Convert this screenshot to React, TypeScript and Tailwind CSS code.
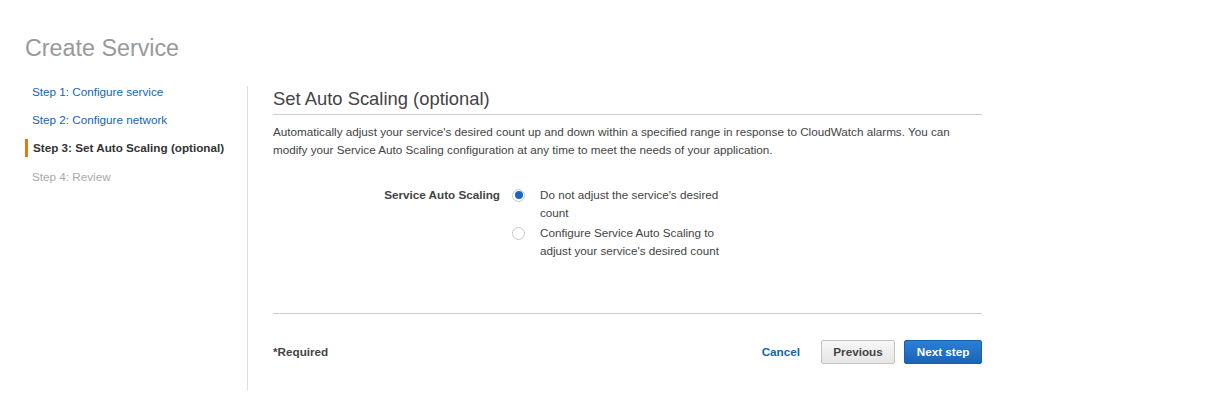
import React from "react";

export default function App() {
  const font = { fontFamily: '"Liberation Sans", Arial, sans-serif' };
  return (
    <div className="min-h-[405px] bg-white pl-[25px] pt-[34px]" style={font}>
      <h1 className="text-[23.3px] leading-[28px] text-[#999999] font-normal">Create Service</h1>
      <div className="flex mt-[15px]">
        <div className="w-[222px] shrink-0 text-[11.7px] pt-[1px]">
          <div className="py-[5px] leading-[18px] pl-[7px] text-[#1166bb]">Step 1: Configure service</div>
          <div className="py-[5px] leading-[18px] pl-[7px] text-[#1166bb]">Step 2: Configure network</div>
          <div className="my-[5px] leading-[18px] pl-[5px] border-l-[3px] border-[#e47911] font-bold text-[#333333]">
            Step 3: Set Auto Scaling (optional)
          </div>
          <div className="py-[6px] leading-[18px] pl-[7px] text-[#aaaaaa]">Step 4: Review</div>
        </div>
        <div className="mt-[9px] border-l border-[#dddddd] pl-[25px] pb-[26px] w-[735px]">
          <h2 className="text-[18.4px] leading-[24px] text-[#444444] font-normal pt-[1px] pb-[3px] border-b border-[#cccccc]">
            Set Auto Scaling (optional)
          </h2>
          <p className="mt-[8px] text-[11.7px] leading-[18px] text-[#444444]">
            Automatically adjust your service's desired count up and down within a specified range in response to CloudWatch alarms. You can modify your Service Auto Scaling configuration at any time to meet the needs of your application.
          </p>
          <div className="mt-[27px] flex text-[11.7px] leading-[18px] text-[#444444]">
            <div className="w-[227px] text-right font-bold">Service Auto Scaling</div>
            <div className="ml-[12px] flex flex-col gap-[2px]">
              <div className="flex">
                <div className="h-[18px] flex items-center">
                  <span className="w-[13px] h-[13px] rounded-full border border-[#c8c8c8] bg-white flex items-center justify-center">
                    <span className="w-[8px] h-[8px] rounded-full bg-[#1a66c2]" />
                  </span>
                </div>
                <div className="ml-[15px] w-[190px]">Do not adjust the service's desired count</div>
              </div>
              <div className="flex">
                <div className="h-[18px] flex items-center">
                  <span className="w-[13px] h-[13px] rounded-full border border-[#c8c8c8] bg-white" />
                </div>
                <div className="ml-[15px] w-[190px]">Configure Service Auto Scaling to adjust your service's desired count</div>
              </div>
            </div>
          </div>
          <div className="mt-[53px] border-t border-[#cccccc]" />
          <div className="mt-[26px] flex items-center text-[11.7px]">
            <div className="font-bold text-[#444444]">*Required</div>
            <div className="ml-auto flex items-center">
              <span className="font-bold text-[#1166bb] mr-[21px]">Cancel</span>
              <button className="h-[24px] w-[74px] rounded-[2px] border border-[#c4c4c4] bg-gradient-to-b from-[#f7f7f7] to-[#e6e6e6] font-bold text-[#444444] text-[11.7px]">
                Previous
              </button>
              <button className="ml-[9px] h-[24px] w-[78px] rounded-[2px] border border-[#1d5fa6] bg-gradient-to-b from-[#2b7fd6] to-[#1a64b8] font-bold text-white text-[11.7px]">
                Next step
              </button>
            </div>
          </div>
        </div>
      </div>
    </div>
  );
}
